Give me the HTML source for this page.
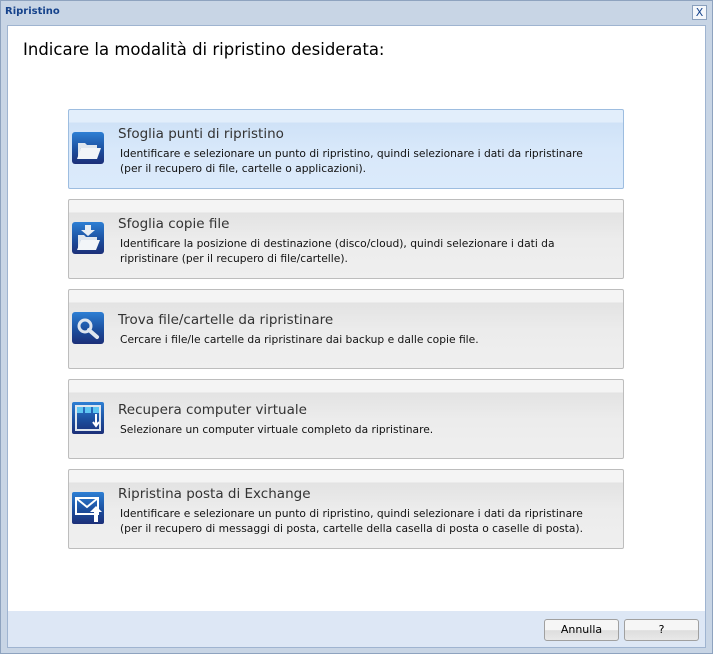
<!DOCTYPE html>
<html><head><meta charset="utf-8"><style>
*{margin:0;padding:0;box-sizing:border-box}
body{width:713px;height:654px;background:#c9d6e6;font-family:"DejaVu Sans",Tahoma,sans-serif;position:relative;overflow:hidden}
.frame{position:absolute;left:0;top:0;width:713px;height:654px;border:1px solid #8ea3bf;background:#c8d5e5}
.title{position:absolute;left:5px;top:6px;font-size:10px;font-weight:bold;color:#15428b}
.close{position:absolute;left:692px;top:5px;width:15px;height:15px;border:1px solid #8aa0bd;background:#f4f7fb;color:#15428b;font-size:11px;text-align:center;line-height:13px}
.content{position:absolute;left:7px;top:25px;width:699px;height:586px;background:#fff;border:1px solid #9fb4d0;border-bottom:none}
.foot{position:absolute;left:7px;top:611px;width:699px;height:37px;background:#dde7f5;border:1px solid #9fb4d0;border-top:none}
h1{position:absolute;left:23px;top:40px;font-size:16.5px;font-weight:normal;color:#000}
.card{position:absolute;left:68px;width:556px;height:80px;border:1px solid #bdbdbd;border-radius:2px;background:linear-gradient(#f4f4f4 0,#f4f4f4 12px,#e3e3e3 13px,#ececec 40px,#efefef 100%)}
.card.sel{border-color:#9dbde0;background:linear-gradient(#e2eefb 0,#e2eefb 12px,#cfe2f7 13px,#d8e8fa 40px,#dbeafb 100%)}
.ic{position:absolute;left:3px;width:32px;height:32px;border-radius:3px;background:linear-gradient(#2e7fd4,#1c4f9e 55%,#1c2f78)}
.t{position:absolute;left:49px;font-size:13.5px;color:#333}
.d{position:absolute;left:51px;font-size:10.7px;color:#111;line-height:15px}
.btn{position:absolute;top:619px;width:75px;height:22px;border:1px solid #a0a0a0;border-radius:3px;background:linear-gradient(#f6f6f6 50%,#dedede 52%,#e8e8e8);font-size:11px;text-align:center;line-height:20px;color:#000}
</style></head><body>
<div class="frame"></div>
<div class="title">Ripristino</div>
<div class="close">X</div>
<div class="content"></div>
<div class="foot"></div>
<h1>Indicare la modalità di ripristino desiderata:</h1>

<div class="card sel" style="top:109px">
 <div class="ic" style="top:22px"><svg width="32" height="32"><path d="M6 11h7l2 2h10v3H9l-3 10z" fill="#dfe6ee"/><path d="M9 16h20l-4 11H5z" fill="#f2f5f8"/></svg></div>
 <div class="t" style="top:16px">Sfoglia punti di ripristino</div>
 <div class="d" style="top:36px">Identificare e selezionare un punto di ripristino, quindi selezionare i dati da ripristinare<br>(per il recupero di file, cartelle o applicazioni).</div>
</div>
<div class="card" style="top:199px">
 <div class="ic" style="top:22px"><svg width="32" height="32"><path d="M13 3h6v5h4l-7 6-7-6h4z" fill="#e8eef4"/><path d="M6 13h6l2 2h11v3H9l-3 9z" fill="#dfe6ee"/><path d="M9 18h19l-4 10H5z" fill="#f2f5f8"/></svg></div>
 <div class="t" style="top:16px">Sfoglia copie file</div>
 <div class="d" style="top:36px">Identificare la posizione di destinazione (disco/cloud), quindi selezionare i dati da<br>ripristinare (per il recupero di file/cartelle).</div>
</div>
<div class="card" style="top:289px">
 <div class="ic" style="top:22px"><svg width="32" height="32"><circle cx="13" cy="14" r="6" fill="none" stroke="#dfe6ee" stroke-width="3"/><path d="M17 18l8 7" stroke="#dfe6ee" stroke-width="4" stroke-linecap="round"/></svg></div>
 <div class="t" style="top:22px">Trova file/cartelle da ripristinare</div>
 <div class="d" style="top:42px">Cercare i file/le cartelle da ripristinare dai backup e dalle copie file.</div>
</div>
<div class="card" style="top:379px">
 <div class="ic" style="top:22px;border-radius:2px"><svg width="32" height="32"><rect x="4" y="4" width="24" height="24" fill="none" stroke="#dfe6ee" stroke-width="2"/><rect x="5" y="5" width="6" height="6" fill="#5ec6f2"/><rect x="13" y="5" width="6" height="6" fill="#5ec6f2"/><rect x="21" y="5" width="6" height="6" fill="#5ec6f2"/><path d="M24 12v11M21 20l3 4 3-4" stroke="#fff" stroke-width="2" fill="none"/></svg></div>
 <div class="t" style="top:22px">Recupera computer virtuale</div>
 <div class="d" style="top:42px">Selezionare un computer virtuale completo da ripristinare.</div>
</div>
<div class="card" style="top:469px">
 <div class="ic" style="top:22px;border-radius:2px"><svg width="32" height="32"><rect x="4" y="6" width="22" height="16" fill="none" stroke="#fff" stroke-width="2"/><path d="M4 6l11 9 11-9" stroke="#fff" stroke-width="2" fill="none"/><path d="M22 30V20h-4l6-6 6 6h-4v10z" fill="#fff"/></svg></div>
 <div class="t" style="top:16px">Ripristina posta di Exchange</div>
 <div class="d" style="top:36px">Identificare e selezionare un punto di ripristino, quindi selezionare i dati da ripristinare<br>(per il recupero di messaggi di posta, cartelle della casella di posta o caselle di posta).</div>
</div>

<div class="btn" style="left:544px">Annulla</div>
<div class="btn" style="left:624px">?</div>
</body></html>
